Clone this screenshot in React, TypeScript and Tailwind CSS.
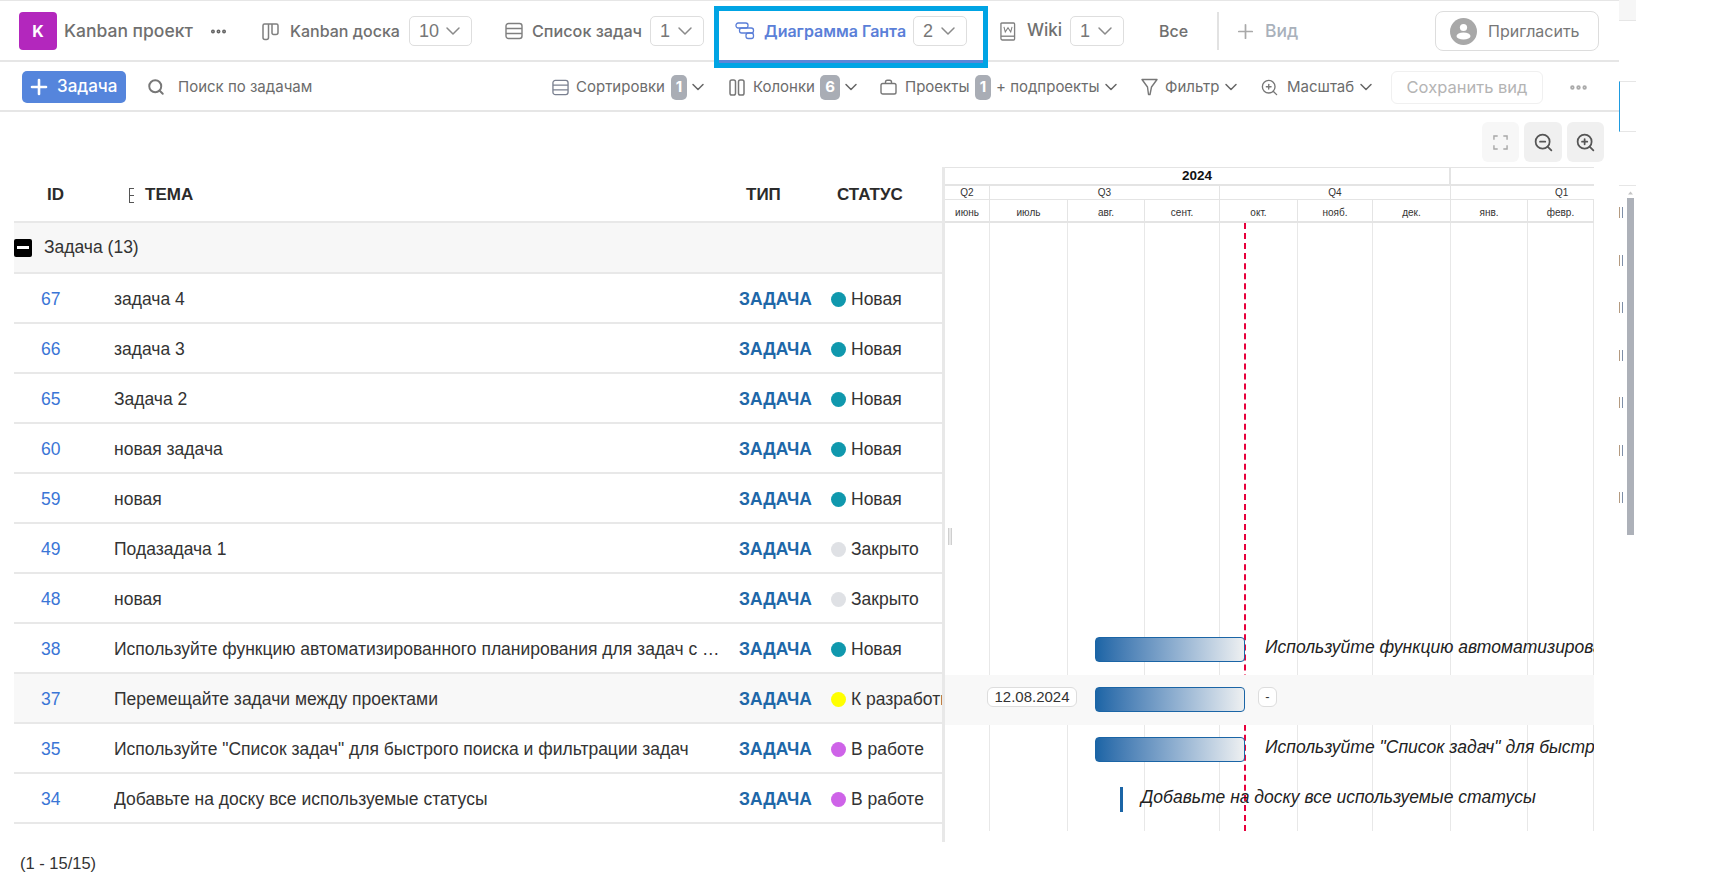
import { ChevronDown, Ellipsis, Plus, Search, ZoomIn, ZoomOut } from 'lucide-react'

type IconProps = { className?: string }

function BoardIcon({ className }: IconProps) {
  return (
    <svg viewBox="0 0 18 19" fill="none" stroke="currentColor" strokeWidth="1.5" className={className}>
      <path d="M7 2H3a1.5 1.5 0 0 0-1.5 1.5v12A2 2 0 0 0 3.5 17.500h1.500A2 2 0 0 0 7 15.500V2h3.500v9a1.500 1.500 0 0 0 1.500 1.500h2.500a2 2 0 0 0 2-2V3.500A1.500 1.500 0 0 0 15 2h-4.500" />
    </svg>
  )
}

function RowsIcon({ className }: IconProps) {
  return (
    <svg viewBox="0 0 18 18" fill="none" stroke="currentColor" strokeWidth="1.4" className={className}>
      <rect x="1" y="1.5" width="16" height="15" rx="2.5" />
      <path d="M1 6.500h16M1 11.500h16" />
    </svg>
  )
}

function GanttIcon({ className }: IconProps) {
  return (
    <svg viewBox="0 0 20 18" fill="none" stroke="currentColor" strokeWidth="1.3" className={className}>
      <rect x="1" y="1" width="12" height="5" rx="2.2" />
      <rect x="4.5" y="6" width="14" height="5" rx="2.2" />
      <rect x="11" y="11" width="7.5" height="5.5" rx="2.2" />
    </svg>
  )
}

function WikiIcon({ className }: IconProps) {
  return (
    <svg viewBox="0 0 17 20" fill="none" stroke="currentColor" strokeWidth="1.4" className={className}>
      <path d="M2.500 1h12a1 1 0 0 1 1 1v16a1 1 0 0 1-1 1h-12a1.500 1.500 0 0 1-1.500-1.500v-16A1.500 1.500 0 0 1 2.500 1z" />
      <path d="M1 15h14.500" />
      <path d="M4.200 5l1.400 5.500L8.500 6l2.900 4.500L12.800 5" strokeWidth="1.1" />
    </svg>
  )
}

function ColumnsIcon({ className }: IconProps) {
  return (
    <svg viewBox="0 0 16 17" fill="none" stroke="currentColor" strokeWidth="1.5" className={className}>
      <rect x="1" y="1" width="5.5" height="15" rx="1.8" />
      <rect x="9.5" y="1" width="5.5" height="15" rx="1.8" />
    </svg>
  )
}

function CaseIcon({ className }: IconProps) {
  return (
    <svg viewBox="0 0 17 16" fill="none" stroke="currentColor" strokeWidth="1.4" className={className}>
      <rect x="1" y="4.5" width="15" height="10.5" rx="1.8" />
      <path d="M5.500 4.500V3a1.800 1.800 0 0 1 1.800-1.800h2.400A1.800 1.800 0 0 1 11.500 3v1.500" />
    </svg>
  )
}

function FunnelIcon({ className }: IconProps) {
  return (
    <svg viewBox="0 0 17 18" fill="none" stroke="currentColor" strokeWidth="1.4" strokeLinejoin="round" className={className}>
      <path d="M1 1.500h15l-5.500 7.500-1.500 7.500H7.500L6.500 9z" />
    </svg>
  )
}

function CornersIcon({ className }: IconProps) {
  return (
    <svg viewBox="0 0 16 16" fill="none" stroke="currentColor" strokeWidth="1.5" className={className}>
      <path d="M1 5V1h4M11 1h4v4M15 11v4h-4M5 15H1v-4" />
    </svg>
  )
}

function Avatar() {
  return (
    <svg viewBox="0 0 27 27" className="size-[27px] shrink-0">
      <circle cx="13.5" cy="13.5" r="13.5" fill="#a8a8a8" />
      <circle cx="13.5" cy="9.5" r="3.6" fill="#fff" />
      <ellipse cx="13.5" cy="18" rx="7" ry="3.6" fill="#fff" />
    </svg>
  )
}

function CountSelect({ value, className }: { value: string; className: string }) {
  return (
    <div className={`flex h-[30px] shrink-0 items-center justify-between rounded-[5px] border border-[#dedede] bg-white pl-[9px] pr-[6px] font-['Liberation_Sans',sans-serif] text-[18px] font-normal text-[#777] ${className}`}>
      <span>{value}</span>
      <ChevronDown className="size-[24px] text-[#8a8a8a]" strokeWidth={1.5} />
    </div>
  )
}

function Badge({ value, className }: { value: string; className: string }) {
  return (
    <span className={`flex h-[25px] shrink-0 items-center justify-center rounded-[5px] bg-[#a9adb5] text-[15px] font-bold text-white ${className}`}>
      {value}
    </span>
  )
}

const caret = <ChevronDown className="-mr-[2px] ml-[1px] size-[20px] shrink-0 text-[#666]" strokeWidth={1.8} />

function Header() {
  return (
    <div className="flex h-[61px] items-center border-b-2 border-[#e6e6e6] pt-px font-['Inter',sans-serif] text-[16px] font-medium text-[#707070]">
      <div className="ml-[19px] flex size-[38px] shrink-0 items-center justify-center rounded-[4px] bg-[#b327bd] text-[16px] font-bold text-white">K</div>
      <span className="ml-[7px] w-[130px] whitespace-nowrap text-[17.5px]">Kanban проект</span>
      <Ellipsis className="ml-[15px] size-[19px] text-[#666]" strokeWidth={3} />
      <BoardIcon className="ml-[33px] size-[19px] text-[#7f7f7f]" />
      <span className="ml-[10px] w-[111px] whitespace-nowrap">Kanban доска</span>
      <CountSelect value="10" className="ml-[8px] w-[63px]" />
      <RowsIcon className="ml-[33px] size-[18px] text-[#7f7f7f]" />
      <span className="ml-[9px] w-[111px] whitespace-nowrap text-[16.2px]">Список задач</span>
      <CountSelect value="1" className="ml-[7px] w-[54px]" />

      <div className="relative ml-[15px] flex h-[61px] w-[264px] shrink-0 items-center self-start border-b-[3px] border-[#5b86d8] pl-[16px] font-semibold text-[#5b7fd8]">
        <GanttIcon className="size-[20px]" />
        <span className="ml-[9px] w-[142px] whitespace-nowrap">Диаграмма Ганта</span>
        <CountSelect value="2" className="ml-[7px] w-[54px]" />
        <div className="pointer-events-none absolute -left-[5px] -right-[5px] top-[4px] h-[62px] border-[5px] border-[#00a4e4]" />
      </div>

      <WikiIcon className="ml-[17px] h-[19px] w-[16px] text-[#7f7f7f]" />
      <span className="ml-[11px] w-[36px] text-[17px]">Wiki</span>
      <CountSelect value="1" className="ml-[7px] w-[54px]" />
      <span className="ml-[35px] w-[29px]">Все</span>
      <div className="ml-[29px] h-[38px] w-[2px] bg-[#e2e2e2]" />
      <Plus className="ml-[15px] size-[23px] text-[#a9a9a9]" strokeWidth={1.8} />
      <span className="ml-[8px] w-[36px] text-[17.5px] text-[#a9b1bb]">Вид</span>
      <button className="ml-[134px] flex h-[40px] w-[164px] shrink-0 items-center rounded-[8px] border border-[#dddddd] pl-[14px] text-[16px] font-normal text-[#777]">
        <Avatar />
        <span className="ml-[11px]">Пригласить</span>
      </button>
    </div>
  )
}

function Toolbar() {
  return (
    <div className="flex h-[50px] items-center border-b-2 border-[#e6e6e6] pt-[2px] font-['Inter',sans-serif] text-[15px] text-[#6c6c6c]">
      <button className="ml-[22px] flex h-[32px] w-[104px] shrink-0 items-center rounded-[5px] bg-[#5585dc] pl-[5px] text-[17px] font-medium text-white">
        <Plus className="size-[24px]" strokeWidth={2.6} />
        <span className="ml-[6px]">Задача</span>
      </button>
      <Search className="ml-[21px] size-[18px] text-[#777]" strokeWidth={2.6} />
      <span className="ml-[13px] w-[150px] whitespace-nowrap">Поиск по задачам</span>

      <RowsIcon className="ml-[224px] size-[17px] text-[#7a8090]" />
      <span className="ml-[7px] w-[92px] whitespace-nowrap">Сортировки</span>
      <Badge value="1" className="ml-[3px] w-[16px]" />
      {caret}

      <ColumnsIcon className="ml-[23px] h-[17px] w-[16px] text-[#777]" />
      <span className="ml-[8px] w-[62px]">Колонки</span>
      <Badge value="6" className="ml-[5px] w-[20px]" />
      {caret}

      <CaseIcon className="ml-[21px] h-[16px] w-[17px] text-[#777]" />
      <span className="ml-[8px] w-[66px]">Проекты</span>
      <Badge value="1" className="ml-[4px] w-[16px]" />
      <span className="ml-[5px] w-[104px] whitespace-nowrap">+ подпроекты</span>
      {caret}

      <FunnelIcon className="ml-[22px] h-[18px] w-[17px] text-[#777]" />
      <span className="ml-[7px] w-[55px]">Фильтр</span>
      {caret}

      <ZoomIn className="ml-[21px] size-[19px] text-[#777]" strokeWidth={1.7} />
      <span className="ml-[8px] w-[68px]">Масштаб</span>
      {caret}

      <button className="ml-[17px] flex h-[33px] w-[152px] shrink-0 items-center justify-center rounded-[6px] border border-[#f0f0f0] text-[16.5px] text-[#b4b4b4]">
        Сохранить вид
      </button>
      <Ellipsis className="ml-[25px] size-[21px] text-[#aaaaaa]" strokeWidth={3} />
    </div>
  )
}

type Task = { id: string; title: string; status: string; dot: string; selected?: boolean }

const tasks: Task[] = [
  { id: '67', title: 'задача 4', status: 'Новая', dot: 'bg-[#1098ad]' },
  { id: '66', title: 'задача 3', status: 'Новая', dot: 'bg-[#1098ad]' },
  { id: '65', title: 'Задача 2', status: 'Новая', dot: 'bg-[#1098ad]' },
  { id: '60', title: 'новая задача', status: 'Новая', dot: 'bg-[#1098ad]' },
  { id: '59', title: 'новая', status: 'Новая', dot: 'bg-[#1098ad]' },
  { id: '49', title: 'Подазадача 1', status: 'Закрыто', dot: 'bg-[#dfe1e5]' },
  { id: '48', title: 'новая', status: 'Закрыто', dot: 'bg-[#dfe1e5]' },
  { id: '38', title: 'Используйте функцию автоматизированного планирования для задач с подзадачами', status: 'Новая', dot: 'bg-[#1098ad]' },
  { id: '37', title: 'Перемещайте задачи между проектами', status: 'К разработке', dot: 'bg-[#ffff00]', selected: true },
  { id: '35', title: 'Используйте "Список задач" для быстрого поиска и фильтрации задач', status: 'В работе', dot: 'bg-[#ce63e8]' },
  { id: '34', title: 'Добавьте на доску все используемые статусы', status: 'В работе', dot: 'bg-[#ce63e8]' },
]

function TaskTable() {
  return (
    <div className="w-[928px] shrink-0 text-[17.5px] text-[#333]">
      <div className="flex h-[56px] items-center border-b-2 border-[#e8e8e8] pt-[2px] text-[17px] font-bold text-[#2b2b2b]">
        <span className="ml-[33px] w-[82px]">ID</span>
        <span className="flex h-[15px] w-[5px] flex-col justify-between border-l border-[#555]">
          <span className="h-px w-[4px] bg-[#555]" />
          <span className="h-px w-[4px] bg-[#555]" />
          <span className="h-px w-[4px] bg-[#555]" />
        </span>
        <span className="ml-[11px] w-[601px]">ТЕМА</span>
        <span className="w-[91px]">ТИП</span>
        <span>СТАТУС</span>
      </div>
      <div className="flex h-[51px] items-center border-b-2 border-[#e8e8e8] bg-[#f7f7f7]">
        <span className="flex size-[18px] items-center justify-center rounded-[2px] bg-black">
          <span className="h-[3px] w-[12px] bg-white" />
        </span>
        <span className="ml-[12px]">Задача (13)</span>
      </div>
      {tasks.map((t) => (
        <div key={t.id} className={`flex h-[50px] items-center border-b-2 border-[#e8e8e8] pt-[2px] ${t.selected ? 'bg-[#f8f8f8]' : ''}`}>
          <span className="ml-[27px] w-[73px] shrink-0 text-[#3a75d6]">{t.id}</span>
          <span className="w-[608px] shrink-0 truncate">{t.title}</span>
          <span className="ml-[17px] w-[92px] shrink-0 font-bold text-[#1e67a8]">ЗАДАЧА</span>
          <span className={`size-[15px] shrink-0 rounded-full ${t.dot}`} />
          <span className="ml-[5px] min-w-0 flex-1 overflow-hidden whitespace-nowrap">{t.status}</span>
        </div>
      ))}
    </div>
  )
}

const months = [
  { label: 'июнь', w: 'w-[45px]' },
  { label: 'июль', w: 'w-[78px]' },
  { label: 'авг.', w: 'w-[77px]' },
  { label: 'сент.', w: 'w-[75px]' },
  { label: 'окт.', w: 'w-[78px]' },
  { label: 'нояб.', w: 'w-[75px]' },
  { label: 'дек.', w: 'w-[78px]' },
  { label: 'янв.', w: 'w-[77px]' },
  { label: 'февр.', w: 'w-[66px]' },
]

const bar = <div className="h-[25px] w-[150px] shrink-0 rounded-[4px] border border-[#1b65a6] bg-linear-to-r from-[#1b65a6] to-[#eef0f1]" />

function BarRow({ label }: { label: string }) {
  return (
    <div className="flex h-[50px] items-start pt-[12px]">
      <div className="ml-[150px]">{bar}</div>
      <span className="ml-[20px] whitespace-nowrap text-[17.5px] italic leading-[20px] text-[#222]">{label}</span>
    </div>
  )
}

function Chart() {
  return (
    <div className="w-[649px] shrink-0 overflow-hidden border-t border-[#e4e4e4] font-['Liberation_Sans',sans-serif] text-[10px] text-[#333]">
      <div className="flex h-[18px] items-center border-b-2 border-[#e4e4e4] text-[13.5px] font-bold leading-none text-[#111]">
        <span className="w-[506px] border-r-2 border-[#e4e4e4] text-center leading-[18px]">2024</span>
      </div>
      <div className="flex h-[14px] border-b border-[#e4e4e4] leading-[14px]">
        <span className="w-[45px] border-r border-[#e4e4e4] text-center">Q2</span>
        <span className="w-[230px] border-r border-[#e4e4e4] text-center">Q3</span>
        <span className="w-[231px] border-r border-[#e4e4e4] text-center">Q4</span>
        <span className="w-[143px] pl-[104px]">Q1</span>
      </div>
      <div className="flex h-[23px] border-b-2 border-[#e4e4e4] leading-[25px]">
        {months.map((m) => (
          <span key={m.label} className={`${m.w} shrink-0 border-r border-[#e4e4e4] text-center`}>{m.label}</span>
        ))}
      </div>

      <div className="relative h-[608px] pt-[2px]">
        <div className="absolute inset-x-0 top-0 bottom-0 flex">
          {months.map((m) => (
            <div key={m.label} className={`${m.w} shrink-0 border-r border-[#e8e8e8]`} />
          ))}
        </div>
        <div className="absolute bottom-0 left-[299px] top-0 border-l-2 border-dashed border-[#e8003c]" />

        <div className="relative">
          <div className="h-[400px]" />
          <BarRow label="Используйте функцию автоматизированного планирования" />
          <div className="flex h-[50px] items-start bg-[#f8f8f8] pt-[12px]">
            <span className="ml-[42px] flex h-[20px] w-[90px] shrink-0 items-center justify-center rounded-[6px] border border-[#dddddd] bg-white text-[15px] text-[#333]">12.08.2024</span>
            <div className="ml-[18px]">{bar}</div>
            <span className="ml-[13px] flex h-[20px] w-[19px] shrink-0 items-center justify-center rounded-[6px] border border-[#dddddd] bg-white text-[13px] text-[#333]">-</span>
          </div>
          <BarRow label={'Используйте "Список задач" для быстрого поиска'} />
          <div className="flex h-[50px] items-start pt-[12px]">
            <div className="ml-[175px] h-[25px] w-[3px] bg-[#1b65a6]" />
            <span className="ml-[18px] whitespace-nowrap text-[17.5px] italic leading-[20px] text-[#222]">Добавьте на доску все используемые статусы</span>
          </div>
        </div>
        <div className="absolute left-[3px] top-[305px] h-[17px] w-[4px] border-x border-[#cfcfcf] bg-[#e8e8e8]" />
      </div>
    </div>
  )
}

function Gutter() {
  return (
    <div className="flex w-[17px] shrink-0 flex-col">
      <div className="h-[21px] border-b border-[#e6e6e6] bg-[#f6f6f6]" />
      <div className="mt-[60px] h-[51px] border-y border-l border-[#e6e6e6] border-l-[#1e9be0]" />
      <div className="mt-[53px] flex grow items-start border-t border-[#e6e6e6]">
        <div className="flex w-[8px] flex-col gap-[36.500px] pt-[21px]">
          {[0, 1, 2, 3, 4, 5, 6].map((n) => (
            <div key={n} className="flex h-[11px] gap-[2px]">
              <span className="w-px bg-[#b49a80]" />
              <span className="w-px bg-[#7f8fa8]" />
            </div>
          ))}
        </div>
        <div className="flex flex-col items-center pt-[5px]">
          <svg viewBox="0 0 7 4" className="h-[4px] w-[7px]">
            <path d="M3.500 0.500 L6 3.500 H1 Z" fill="#c4c4c4" />
          </svg>
          <div className="mt-[3px] h-[337px] w-[7px] bg-[#adb1b9]" />
        </div>
      </div>
    </div>
  )
}

export default function App() {
  return (
    <div className="flex h-[892px] w-[1711px] overflow-hidden bg-white font-['Liberation_Sans',sans-serif]">
      <div className="w-[1619px] shrink-0">
        <div className="h-px bg-[#e6e6e6]" />
        <Header />
        <Toolbar />
        <div className="flex h-[55px] justify-end gap-[5px] pr-[15px] pt-[10px]">
          <button className="flex h-[40px] w-[37px] items-center justify-center rounded-[6px] bg-[#f7f7f7] text-[#a8a8a8]">
            <CornersIcon className="size-[15px]" />
          </button>
          <button className="flex h-[40px] w-[38px] items-center justify-center rounded-[6px] bg-[#f0f0f0] text-[#555]">
            <ZoomOut className="size-[21px]" strokeWidth={2} />
          </button>
          <button className="flex h-[40px] w-[37px] items-center justify-center rounded-[6px] bg-[#f0f0f0] text-[#555]">
            <ZoomIn className="size-[21px]" strokeWidth={2} />
          </button>
        </div>
        <div className="flex h-[675px] pl-[14px]">
          <TaskTable />
          <div className="w-[3px] shrink-0 bg-[#e8e8e8]" />
          <Chart />
        </div>
        <div className="ml-[20px] mt-[11px] text-[16.500px] leading-[20px] text-[#333]">(1 - 15/15)</div>
      </div>
      <Gutter />
    </div>
  )
}
